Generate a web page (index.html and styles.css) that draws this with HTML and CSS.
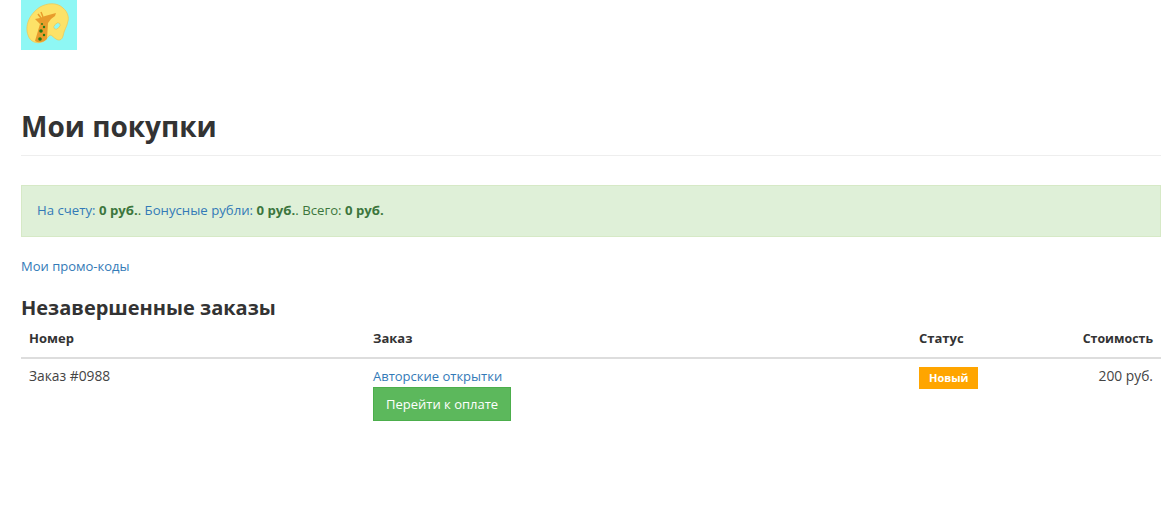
FILE: index.html
```html
<!DOCTYPE html>
<html>
<head>
    <title>Мои покупки</title>
    <meta charset="utf-8">
    <link rel="stylesheet" href="styles.css">
</head>
<body>
    <div id="ctr">
        <a class="logo" href="#">
            <svg width="56" height="50" viewBox="0 0 56 50">
                <rect width="56" height="50" fill="#8ef7f4"/>
                <path d="M7 35C4 27 7 15 19 7C26 3 36 2 42 8C47 12 48 18 47 21C46 27 43 30 42 36C41 40 38 41 35 39C33 38 31 35 29 35C26 37 25 41 21 42C16 44 9 42 7 35Z" fill="#fde268" stroke="#f2c64e" stroke-width=".7"/>
                <ellipse cx="36" cy="26" rx="3.800" ry="2.400" transform="rotate(-45 36 26)" fill="#8ef7f4" stroke="#f2c64e" stroke-width=".7"/>
                <path d="M14 41L19 24L14 19L19 18L24 16L35 13L34 16L30 19L27 23L26 39C22 43 17 43 14 41Z" fill="#e89c2c"/>
                <path d="M20 18L17 14M22 17L20 12" stroke="#e89c2c" stroke-width="1.500" fill="none"/>
                <g fill="#1f7a16">
                    <circle cx="19" cy="39" r="1.800"/>
                    <circle cx="20" cy="31" r="1.800"/>
                    <circle cx="23" cy="35" r="1.200"/>
                    <circle cx="23" cy="27" r="1.200"/>
                    <circle cx="21" cy="24" r=".9"/>
                </g>
            </svg>
        </a>
        <h1 class="page-title">Мои покупки</h1>
        <div class="alert">
            <a href="#">На счету:</a> <b>0 руб.</b>. <a href="#">Бонусные рубли:</a> <b>0 руб.</b>. Всего: <b>0 руб.</b>
        </div>
        <p class="promo"><a href="#">Мои промо-коды</a></p>
        <h3 class="sub-title">Незавершенные заказы</h3>
        <table class="orders">
            <thead>
                <tr>
                    <th class="col-num">Номер</th>
                    <th class="col-order">Заказ</th>
                    <th class="col-status">Статус</th>
                    <th class="col-price">Стоимость</th>
                </tr>
            </thead>
            <tbody>
                <tr>
                    <td class="order-no">Заказ #0988</td>
                    <td>
                        <a href="#">Авторские открытки</a><br/>
                        <a class="btn-pay" href="#">Перейти к оплате</a>
                    </td>
                    <td><span class="badge">Новый</span></td>
                    <td class="col-price order-no">200 руб.</td>
                </tr>
            </tbody>
        </table>
    </div>
</body>
</html>
```

FILE: styles.css
```css
body{
    margin:0;
    font-family:"Open Sans","Noto Sans",sans-serif;
    font-size:13px;
    line-height:20px;
    color:#333;
    background:#fff;
}
a{
    color:#337ab7;
    text-decoration:none;
}
#ctr{
    padding:0 15px 0 21px;
}
.logo{
    display:block;
    height:50px;
}
.logo svg{
    display:block;
}
.page-title{
    margin:0;
    padding:56px 0 9px;
    font-size:28px;
    line-height:40px;
    font-weight:700;
    border-bottom:1px solid #eee;
}
.alert{
    margin-top:29px;
    padding:14px 15px 16px;
    background:#dff0d8;
    border:1px solid #d6e9c6;
    color:#3c763d;
    font-size:13.2px;
}
.promo{
    margin:19px 0 0;
}
.sub-title{
    margin:21px 0 0;
    font-size:20px;
    line-height:22px;
    font-weight:700;
}
.orders{
    width:100%;
    border-collapse:collapse;
    table-layout:fixed;
    margin-top:1px;
}
.orders th{
    padding:8px;
    text-align:left;
    font-weight:700;
    vertical-align:baseline;
    border-bottom:2px solid #ddd;
}
.orders td{
    padding:7px 8px 8px;
    vertical-align:top;
}
.col-num{
    width:328px;
}
.col-status{
    width:122px;
}
.col-price{
    width:96px;
}
.orders .col-price{
    text-align:right;
}
.orders th.col-price{
    font-size:12.4px;
}
.order-no{
    font-size:13.8px;
    color:#444;
}
.btn-pay{
    display:inline-block;
    padding:6px 12px;
    margin-top:1px;
    background:#5cb85c;
    border:1px solid #4cae4c;
    color:#fff;
}
.badge{
    display:inline-block;
    padding:1px 10px;
    margin-top:1px;
    background:orange;
    color:#fff;
    font-size:11px;
    font-weight:700;
}
```
